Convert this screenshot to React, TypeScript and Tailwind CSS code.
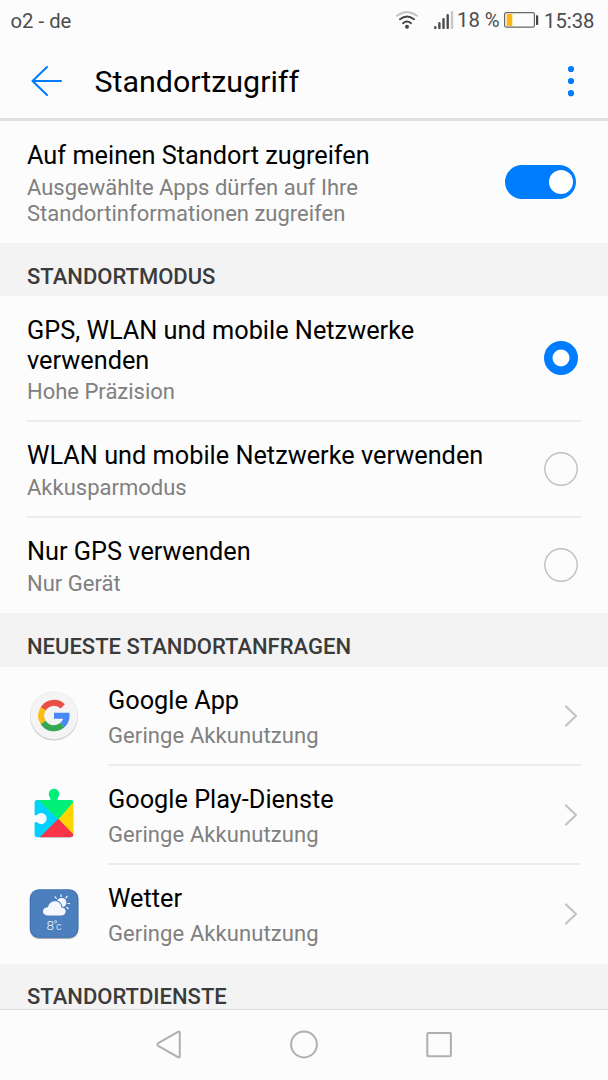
import type { ReactNode } from 'react';

function StatusBar() {
  return (
    <div className="flex h-10 shrink-0 items-center justify-between pl-[10.5px] pr-[13.5px] text-[20.3px] leading-none text-[#4c4c4c]">
      <span className="pt-[3px]">o2 - de</span>
      <div className="flex items-center">
        <svg className="h-[20px] w-[24px]" viewBox="395 10 24 20" fill="none" strokeLinecap="round">
          <path d="M397 15.8Q407 8 417 15.8" stroke="#c4c4c4" strokeWidth="1.9" />
          <path d="M400 19.3Q407 13.8 414 19.3" stroke="#444" strokeWidth="1.9" />
          <path d="M403 23.2Q407 20 411 23.2" stroke="#444" strokeWidth="1.9" />
          <circle cx="407" cy="26.8" r="2" fill="#444" />
        </svg>
        <svg className="ml-[14px] h-[20px] w-[21px]" viewBox="433 10 21 20" strokeWidth="2.4" strokeLinecap="round" stroke="#4c4c4c">
          <path d="M435.3 27.2v.7M439.4 23.2v4.7M443.5 19.3v8.6M447.7 15.3v12.6" />
          <path d="M452 12v15.9" stroke="#c8c8c8" />
        </svg>
        <span className="ml-[3px] w-[46px] whitespace-nowrap">18 %</span>
        <svg className="h-[18px] w-[36px]" viewBox="503 11 36 18">
          <rect x="504.6" y="12.6" width="29.8" height="14.6" rx="1.8" fill="none" stroke="#666" strokeWidth="1.2" />
          <rect x="506.7" y="14" width="5.6" height="12" fill="#fdb913" />
          <rect x="536" y="15.3" width="2.2" height="9.6" rx="0.6" fill="#444" />
        </svg>
        <span className="ml-[5px] pt-[2px]">15:38</span>
      </div>
    </div>
  );
}

function Header() {
  return (
    <header className="flex h-[81px] shrink-0 items-center border-b-[3px] border-[#dfdfdf] pl-[30px] pr-[26px]">
      <svg className="mt-1 h-[34px] w-[34px]" viewBox="30 64 34 34" fill="none" stroke="#007dff" strokeWidth="2.1" strokeLinecap="round" strokeLinejoin="round">
        <path d="M61 81H32.5M47 67 32.5 81 47 95" />
      </svg>
      <h1 className="ml-[30.5px] flex-1 pt-[5px] text-[30.4px] leading-9 text-black">Standortzugriff</h1>
      <svg className="mt-1 h-[34px] w-[22px]" viewBox="560 64 22 34" fill="#007dff">
        <circle cx="571" cy="69" r="3.1" />
        <circle cx="571" cy="81" r="3.1" />
        <circle cx="571" cy="93.2" r="3.1" />
      </svg>
    </header>
  );
}

function SectionTitle({ children, className = 'h-[53px] pb-[7px]' }: { children: ReactNode; className?: string }) {
  return (
    <h2 className={`flex shrink-0 items-end bg-[#f3f3f3] pl-[27px] text-[22px] font-medium leading-[26px] text-[#3b3b3b] ${className}`}>
      {children}
    </h2>
  );
}

type ModeRowProps = {
  title: ReactNode;
  detail: string;
  selected?: boolean;
  className: string;
  textClassName: string;
};

function ModeRow({ title, detail, selected = false, className, textClassName }: ModeRowProps) {
  return (
    <div className={`mx-[27px] flex shrink-0 items-center ${className}`}>
      <div className={`flex flex-1 flex-col ${textClassName}`}>
        <div className="whitespace-nowrap text-[25.3px] leading-[30px] text-black">{title}</div>
        <div className="text-[22px] leading-[26px] text-[#808080]">{detail}</div>
      </div>
      <svg className="mb-px mr-[3px] size-[34px]" viewBox="0 0 34 34" fill="none">
        {selected ? (
          <circle cx="17" cy="17" r="12.75" fill="#fff" stroke="#007dff" strokeWidth="8.5" />
        ) : (
          <circle cx="17" cy="17" r="16.2" stroke="#bfbfbf" strokeWidth="1.4" />
        )}
      </svg>
    </div>
  );
}

function AppRow({ icon, name, last = false }: { icon: ReactNode; name: string; last?: boolean }) {
  return (
    <div className="flex h-[99px] shrink-0 items-center px-[27px]">
      <div className="mb-[2px] mr-[27px] size-[54px]">{icon}</div>
      <div className={`flex h-full flex-1 items-center border-b-2 ${last ? 'border-transparent' : 'border-[#ededed]'}`}>
        <div className="flex-1 pt-1">
          <div className="text-[25.3px] leading-[30px] text-black">{name}</div>
          <div className="mt-[7px] text-[22px] leading-[26px] tracking-[0.1px] text-[#808080]">Geringe Akkunutzung</div>
        </div>
        <svg className="mr-[2px] mt-px h-6 w-4" viewBox="0 0 16 24" fill="none" stroke="#c4c4c4" strokeWidth="2.3" strokeLinecap="round" strokeLinejoin="round">
          <path d="M3 2.5 13 12 3 21.5" />
        </svg>
      </div>
    </div>
  );
}

function GoogleIcon() {
  return (
    <svg className="size-full" viewBox="27 689 54 54">
      <circle cx="54" cy="716.6" r="24" fill="#c5c5c5" />
      <circle cx="54" cy="715.6" r="24.1" fill="#e0e0e0" />
      <circle cx="54" cy="715.4" r="23.6" fill="#f4f4f4" />
      <g fill="none" strokeWidth="6">
        <path d="M43.2 708.8A12.7 12.7 0 0 1 62.8 706.4" stroke="#ea4f43" />
        <path d="M43.2 722.3A12.7 12.7 0 0 1 43.2 708.8" stroke="#fbbc16" />
        <path d="M62.4 725.1A12.7 12.7 0 0 1 43.2 722.3" stroke="#34a853" />
        <path d="M54 715.7H69.4M66.5 715.7Q66.7 721.3 62.4 725.1" stroke="#4688f4" />
      </g>
    </svg>
  );
}

function PlayServicesIcon() {
  return (
    <svg className="size-full" viewBox="27 788 54 54">
      <defs>
        <clipPath id="puzzle">
          <path d="M37 800H50.6V798A5.2 5.2 0 1 1 57.4 798V800H70.5Q73.2 800 73.2 802.8V834.5Q73.2 837.3 70.5 837.3H37.5Q34.6 837.3 34.6 834.5V822.3Q34.9 821.6 37 822.2A5.5 5.5 0 1 0 37 815Q34.9 815.6 34.6 814.9V802.8Q34.6 800 37 800Z" />
        </clipPath>
      </defs>
      <g clipPath="url(#puzzle)">
        <path d="M34 788H76V842H34Z" fill="#00d2ff" />
        <path d="M74 800 58.3 819 76 838V800Z" fill="#ffd500" />
        <path d="M38 839 58.3 818.8 76 837V839Z" fill="#f93448" />
        <path d="M38 800 58.3 819.2 74.5 801V788H38Z" fill="#00ef76" />
      </g>
    </svg>
  );
}

function WeatherIcon() {
  return (
    <svg className="size-full" viewBox="27 887 54 54">
      <rect x="29.8" y="890.5" width="48.6" height="48.4" rx="9" fill="#a3aab4" />
      <rect x="29.8" y="889.3" width="48.6" height="48.4" rx="9" fill="#3970b5" />
      <rect x="30.8" y="890.3" width="46.6" height="46.4" rx="8" fill="#4c7fbe" />
      <circle cx="61.6" cy="902.7" r="4.8" fill="#f5f8fc" />
      <path d="M56.2 898.2 55 896.9M61 896.4v-1.5M65.9 897.8l1.3-1.5M68 903.5h1.5M66.7 907.5l1.5 1" stroke="#fff" strokeWidth="1.2" strokeLinecap="round" />
      <path d="M47 916Q42.3 915.2 42.4 911.3 42.8 907.3 47.4 906.8 49.3 900.3 55.6 900.7 61 901.2 61.9 907 66.3 907.7 66.2 911.7 65.8 915.8 61.2 916Z" fill="#f4f7fb" stroke="#4c7fbe" strokeWidth="1.1" />
      <text x="46.6" y="929.5" fill="#edf4ff" fontSize="13.5" fontWeight="300">8</text>
      <circle cx="55.6" cy="921.7" r="1.1" fill="none" stroke="#edf4ff" strokeWidth="0.8" />
      <text x="56" y="929.5" fill="#edf4ff" fontSize="10.5" fontWeight="300">c</text>
    </svg>
  );
}

function NavigationBar() {
  return (
    <nav className="flex h-[71px] shrink-0 items-center justify-center gap-[103px] border-t border-[#dedede] bg-[#fcfcfc]">
      <svg className="size-8" viewBox="153 1029 32 32" fill="none" stroke="#afafaf" strokeWidth="2" strokeLinejoin="round">
        <path d="M158.2 1043.2 178 1031.8Q179.7 1031 179.8 1032.8V1056.2Q179.7 1058 178 1057.2L158.2 1045.8Q156.4 1044.5 158.2 1043.2Z" />
      </svg>
      <svg className="size-8" viewBox="288 1029 32 32" fill="none" stroke="#afafaf" strokeWidth="2">
        <circle cx="304" cy="1044.5" r="12.9" />
      </svg>
      <svg className="size-8" viewBox="423 1029 32 32" fill="none" stroke="#afafaf" strokeWidth="2">
        <rect x="427.3" y="1033" width="23.6" height="23.2" rx="1" />
      </svg>
    </nav>
  );
}

export default function App() {
  return (
    <div className="flex h-[1080px] w-[608px] flex-col overflow-hidden bg-[#fcfcfc] font-['Roboto',sans-serif]">
      <StatusBar />
      <Header />
      <main className="flex min-h-0 flex-1 flex-col overflow-hidden">
        <div className="flex h-[122px] shrink-0 items-center pl-[27px] pr-8">
          <div className="flex-1 pt-[3px]">
            <div className="text-[25.3px] leading-[30px] text-black">Auf meinen Standort zugreifen</div>
            <div className="mt-1 text-[22px] leading-[26px] text-[#808080]">
              Ausgewählte Apps dürfen auf Ihre<br />Standortinformationen zugreifen
            </div>
          </div>
          <div className="flex h-[34px] w-[71px] items-center justify-end rounded-full bg-[#007dff] pr-[3.5px]">
            <div className="size-6 rounded-full bg-white" />
          </div>
        </div>
        <SectionTitle className="h-[53px] pb-[6px]">STANDORTMODUS</SectionTitle>
        <ModeRow
          title={<>GPS, WLAN und mobile Netzwerke<br />verwenden</>}
          detail="Hohe Präzision"
          selected
          className="h-[126px] border-b-2 border-[#ededed]"
          textClassName="gap-[3px] pt-1"
        />
        <ModeRow
          title="WLAN und mobile Netzwerke verwenden"
          detail="Akkusparmodus"
          className="h-24 border-b-2 border-[#ededed]"
          textClassName="gap-1 pt-[3px]"
        />
        <ModeRow title="Nur GPS verwenden" detail="Nur Gerät" className="h-[95px]" textClassName="gap-1 pt-[2px]" />
        <SectionTitle className="h-[54px] pb-[7px]">NEUESTE STANDORTANFRAGEN</SectionTitle>
        <AppRow icon={<GoogleIcon />} name="Google App" />
        <AppRow icon={<PlayServicesIcon />} name="Google Play-Dienste" />
        <AppRow icon={<WeatherIcon />} name="Wetter" last />
        <SectionTitle>STANDORTDIENSTE</SectionTitle>
      </main>
      <NavigationBar />
    </div>
  );
}
